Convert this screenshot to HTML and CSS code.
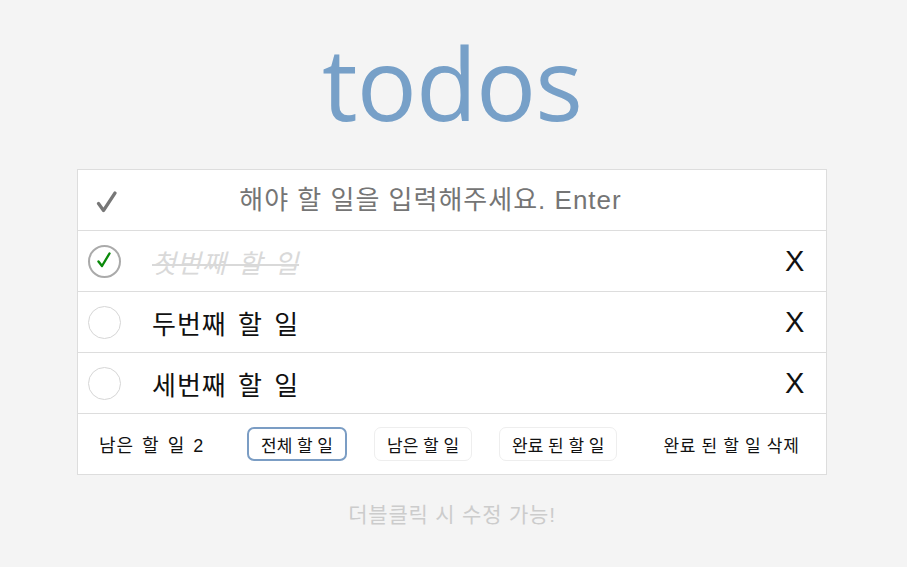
FILE: index.html
```html
<!DOCTYPE html>
<html lang="ko">
<head>
<meta charset="utf-8">
<title>todos</title>
<link rel="stylesheet" href="styles.css">
</head>
<body>
<div class="app">
  <h1 class="title">todos</h1>
  <section class="panel">
    <header class="new-row">
      <button class="toggle-all"><svg width="22" height="22" viewBox="0 0 22 22"><path d="M2.5 12.5 L7.5 19.5 L19 2" fill="none" stroke="#777" stroke-width="3.2" stroke-linecap="round" stroke-linejoin="round"/></svg></button>
      <input class="new-input" type="text" placeholder="해야 할 일을 입력해주세요. Enter">
    </header>
    <ul class="list">
      <li class="item done">
        <span class="check checked"><svg width="14" height="16" viewBox="0 0 14 16"><path d="M1.5 9.5 L5 14 L12.5 1.5" fill="none" stroke="#0a8a0a" stroke-width="2.4" stroke-linecap="round" stroke-linejoin="round"/></svg></span>
        <span class="label">첫번째 할 일</span>
        <span class="remove">X</span>
      </li>
      <li class="item">
        <span class="check"></span>
        <span class="label">두번째 할 일</span>
        <span class="remove">X</span>
      </li>
      <li class="item">
        <span class="check"></span>
        <span class="label">세번째 할 일</span>
        <span class="remove">X</span>
      </li>
    </ul>
    <footer class="footer">
      <span class="count">남은 할 일 2</span>
      <div class="filters">
        <button class="filter active">전체 할 일</button>
        <button class="filter">남은 할 일</button>
        <button class="filter">완료 된 할 일</button>
      </div>
      <button class="clear">완료 된 할 일 삭제</button>
    </footer>
  </section>
  <p class="hint">더블클릭 시 수정 가능!</p>
</div>
</body>
</html>
```
FILE: styles.css
```css
* { box-sizing: border-box; }
html, body { margin: 0; padding: 0; }
body {
  background: #f4f4f4;
  font-family: "Liberation Sans", "Noto Sans CJK KR", sans-serif;
  color: #111;
}
.app {
  display: flex;
  flex-direction: column;
  align-items: center;
  padding-top: 12px;
  padding-right: 3px;
}
.title {
  margin: 0;
  font-family: "Open Sans", "Noto Sans", sans-serif;
  font-weight: 400;
  font-size: 100px;
  line-height: 140px;
  height: 157px;
  color: #77a0c8;
  letter-spacing: -1px;
}
.panel {
  width: 750px;
  background: #fff;
  border: 1px solid #dddddd;
}
.new-row {
  display: flex;
  align-items: center;
  height: 61px;
  border-bottom: 1px solid #dddddd;
}
.toggle-all {
  width: 58px;
  height: 40px;
  border: 0;
  background: none;
  padding: 0 0 0 18px;
  display: flex;
  align-items: center;
  margin-top: 4px;
}
.new-input {
  flex: 1;
  height: 58px;
  border: 0;
  outline: none;
  font-family: "Liberation Sans", "Noto Sans CJK KR", sans-serif;
  font-size: 26px;
  letter-spacing: 1px;
  text-align: center;
  padding: 0 101px 0 0;
  background: transparent;
}
.new-input::placeholder { color: #757575; }
.list { list-style: none; margin: 0; padding: 0; }
.item {
  display: flex;
  align-items: center;
  height: 61px;
  border-bottom: 1px solid #dddddd;
  padding-left: 10px;
}
.check {
  width: 33px;
  height: 33px;
  border: 1px solid #d6d6d6;
  border-radius: 50%;
  display: flex;
  align-items: center;
  justify-content: center;
  flex: none;
}
.check.checked { border: 2px solid #aaaaaa; }
.check svg { margin: -2px 0 0 -2px; }
.label {
  flex: 1;
  margin-left: 31px;
  font-size: 26px;
  letter-spacing: 1px;
  word-spacing: 3px;
  color: #111;
}
.done .label {
  color: #d9d9d9;
  font-style: italic;
  text-decoration: line-through;
}
.remove {
  font-size: 29px;
  width: 41px;
  color: #111;
}
.footer {
  display: flex;
  align-items: center;
  height: 60px;
  padding-left: 21px;
  font-size: 18px;
}
.count { width: 148px; font-size: 18px; letter-spacing: 1px; word-spacing: 2px; }
.filters { display: flex; gap: 27px; }
.filter {
  font-family: "Liberation Sans", "Noto Sans CJK KR", sans-serif;
  font-size: 17px;
  background: #fff;
  border: 1px solid #eeeeee;
  border-radius: 7px;
  height: 34px;
  padding: 0 12px;
  color: #111;
}
.filter.active { border: 2px solid #7b9dc4; padding: 0 12px; }
.clear {
  margin-left: 46px;
  border: 0;
  background: none;
  font-family: "Liberation Sans", "Noto Sans CJK KR", sans-serif;
  font-size: 17px;
  letter-spacing: 0.7px;
  color: #111;
  padding: 0;
}
.hint {
  margin: 23px 0 0;
  font-size: 21px;
  letter-spacing: 0.8px;
  color: #cccccc;
}
```
